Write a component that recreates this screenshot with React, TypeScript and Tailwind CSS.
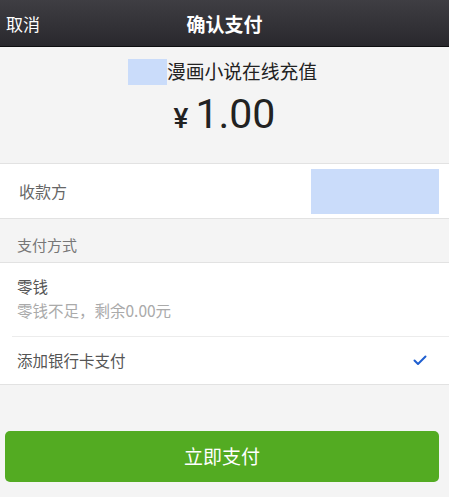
import React from "react";

const cjk = { fontFamily: '"Noto Sans CJK SC", "Noto Sans", sans-serif' };
const num = { fontFamily: 'Roboto, "Noto Sans CJK SC", sans-serif' };

export default function App() {
  return (
    <div className="w-[449px] h-[497px] bg-[#f4f4f4] flex flex-col overflow-hidden" style={cjk}>
      {/* Header */}
      <div className="h-[47px] shrink-0 bg-gradient-to-b from-[#3f3e43] to-[#29282d] border-b border-[#0e0e10] flex items-center relative">
        <span className="pl-[6px] text-white text-[17px] leading-none">取消</span>
        <span className="absolute left-0 right-0 text-center text-white text-[19px] font-bold leading-none pointer-events-none">确认支付</span>
      </div>

      {/* Summary */}
      <div className="h-[116px] shrink-0 flex flex-col items-center pt-[11px]">
        <div className="flex items-center h-[27px] pr-[4px]">
          <div className="w-[39px] h-[26px] bg-[#cadcfa]" />
          <span className="text-[18.8px] text-[#222] leading-none">漫画小说在线充值</span>
        </div>
        <div className="flex items-baseline mt-[9px] text-[#222] leading-none" style={num}>
          <span className="text-[28px] font-medium mr-[7px]">¥</span>
          <span className="text-[41px]">1.00</span>
        </div>
      </div>

      {/* Payee */}
      <div className="h-[56px] shrink-0 bg-white border-y border-[#e2e2e2] flex items-center justify-between pl-[19px] pr-[10px]">
        <span className="text-[16px] text-[#666]">收款方</span>
        <div className="w-[128px] h-[45px] bg-[#cadcfa]" />
      </div>

      {/* Payment method label */}
      <div className="h-[43px] shrink-0 flex items-end pl-[17px] pb-[6px]">
        <span className="text-[15px] text-[#777]">支付方式</span>
      </div>

      {/* Options */}
      <div className="shrink-0 bg-white border-y border-[#e2e2e2]">
        <div className="h-[73px] flex flex-col pl-[17px] pt-[13px]">
          <span className="text-[15.5px] text-[#555] leading-[20px]">零钱</span>
          <span className="text-[15.5px] text-[#aaa] leading-[20px] mt-[4px]">零钱不足，剩余0.00元</span>
        </div>
        <div className="ml-[12px] h-px bg-[#ececec]" />
        <div className="h-[47px] flex items-center justify-between pl-[17px] pr-[22px]">
          <span className="text-[15.5px] text-[#555]">添加银行卡支付</span>
          <svg width="14" height="11" viewBox="0 0 14 11" fill="none">
            <path d="M1.5 5.5 L5 9 L12.5 1.5" stroke="#1f5fd0" strokeWidth="2" strokeLinecap="round" strokeLinejoin="round" />
          </svg>
        </div>
      </div>

      {/* Button */}
      <div className="pt-[46px] px-[5px] pr-[10px]">
        <button className="w-full h-[51px] rounded-[5px] bg-[#53ab22] text-white text-[19px] flex items-center justify-center">
          立即支付
        </button>
      </div>
    </div>
  );
}
